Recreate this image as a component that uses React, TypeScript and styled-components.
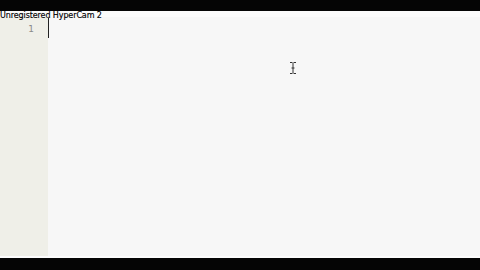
import React from 'react';
import styled, { createGlobalStyle } from 'styled-components';

const GlobalStyle = createGlobalStyle`
  html, body {
    margin: 0;
    padding: 0;
    background: #000;
  }
`;

const Screen = styled.div`
  position: relative;
  width: 480px;
  height: 270px;
  display: flex;
  flex-direction: column;
  background: #050505;
  overflow: hidden;
`;

const BlackBar = styled.div<{ $h: number }>`
  height: ${(p) => p.$h}px;
  flex: none;
  background: #050505;
`;

const TopStrip = styled.div`
  height: 6px;
  flex: none;
  background: #fbfbfb;
`;

const Editor = styled.div`
  flex: 1;
  display: flex;
  background: #f7f7f7;
`;

const Gutter = styled.div`
  width: 48px;
  flex: none;
  background: #efefe8;
  display: flex;
  flex-direction: column;
  align-items: flex-end;
  padding: 6px 14px 0 0;
  box-sizing: border-box;
`;

const LineNo = styled.span`
  font-family: 'DejaVu Sans', sans-serif;
  font-size: 9px;
  color: #8a8a88;
  line-height: 12px;
`;

const Content = styled.div`
  flex: 1;
  position: relative;
`;

const Caret = styled.div`
  width: 1px;
  height: 20px;
  margin-top: 1px;
  background: #222;
`;

const BottomLine = styled.div`
  height: 2px;
  flex: none;
  background: #fdfdfd;
`;

const Watermark = styled.div`
  position: absolute;
  left: 0;
  top: 11px;
  font-family: 'DejaVu Sans', sans-serif;
  font-size: 8px;
  line-height: 10px;
  color: #000;
  -webkit-text-stroke: 0.15px #000;
  letter-spacing: -0.1px;
`;

const IBeam = styled.svg`
  position: absolute;
  left: 242px;
  top: 45px;
`;

export default function App() {
  return (
    <>
      <GlobalStyle />
      <Screen>
        <BlackBar $h={11} />
        <TopStrip />
        <Editor>
          <Gutter>
            <LineNo>1</LineNo>
          </Gutter>
          <Content>
            <Caret />
            <IBeam width="6" height="12" viewBox="0 0 6 12">
              <path d="M0 0.5h2.5M3.5 0.5h2.5M3 1v10M0 11.5h2.5M3.5 11.5h2.5M1.5 6h3" stroke="#333" strokeWidth="1" fill="none" />
            </IBeam>
          </Content>
        </Editor>
        <BottomLine />
        <BlackBar $h={12} />
        <Watermark>Unregistered HyperCam 2</Watermark>
      </Screen>
    </>
  );
}
